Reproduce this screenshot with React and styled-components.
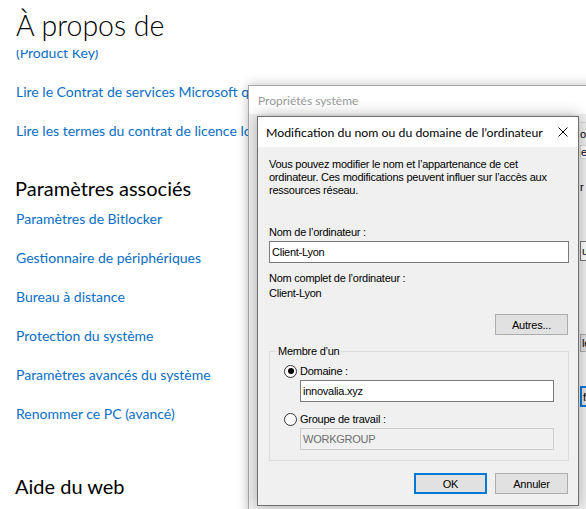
import React from 'react';
import styled, { createGlobalStyle } from 'styled-components';

const WIN = `"Liberation Sans", Arial, sans-serif`;
const UI = `Lato, "Liberation Sans", sans-serif`;

const Global = createGlobalStyle`
  html, body { margin: 0; padding: 0; background: #fff; }
  body { width: 586px; height: 509px; overflow: hidden; }
  * { box-sizing: border-box; }
`;

const Screen = styled.div`
  position: relative;
  width: 586px;
  height: 509px;
  overflow: hidden;
  background: #fff;
  font-family: ${UI};
`;

/* ---------- Settings page ---------- */
const SettingsPage = styled.main`
  display: flex;
  flex-direction: column;
  height: 100%;
`;

const PageHeader = styled.header`
  flex: none;
  height: 50px;
  padding: 8px 0 0 16px;
`;

const PageTitle = styled.h1`
  margin: 0;
  font-family: ${UI};
  font-weight: 300;
  font-size: 28.5px;
  line-height: 34px;
  color: #000;
`;

const Scroller = styled.div`
  flex: 1;
  overflow: hidden;
`;

const ScrollContent = styled.div`
  margin-top: -7px;
  padding-left: 16px;
  display: flex;
  flex-direction: column;
`;

const Section = styled.section`
  display: flex;
  flex-direction: column;
  margin-top: ${(p) => p.$space || 0}px;
`;

const SectionHeading = styled.h2`
  margin: 0 0 7px -1px;
  font-family: ${UI};
  font-weight: 400;
  font-size: 20px;
  line-height: 28px;
  color: #000;
`;

const LinkStack = styled.div`
  display: flex;
  flex-direction: column;
  gap: 19px;
`;

const SettingsLink = styled.a`
  display: block;
  font-size: 14px;
  line-height: 20px;
  color: #0a6ec6;
  text-decoration: none;
  white-space: nowrap;
`;

/* ---------- Back window (Propriétés système) ---------- */
const BackWindow = styled.section`
  position: absolute;
  left: 248px;
  top: 85px;
  width: 380px;
  height: 460px;
  border: 1px solid #a8a8a8;
  background: #f0f0f0;
  box-shadow: 0 0 10px rgba(0, 0, 0, 0.25);
  display: flex;
  flex-direction: column;
`;

const BackTitleBar = styled.div`
  flex: none;
  height: 28px;
  background: #fff;
  display: flex;
  align-items: center;
  padding-left: 9px;
  font-family: ${UI};
  font-size: 12px;
  color: #999;
`;

const BackBody = styled.div`
  flex: 1;
  display: flex;
  flex-direction: column;
  padding-left: 331px;
  font-family: ${WIN};
  font-size: 11px;
  letter-spacing: -0.25px;
  color: #000;
  white-space: nowrap;
`;

const TabRow = styled.div`
  height: ${(p) => p.$h}px;
  margin-top: ${(p) => p.$mt || 0}px;
  display: flex;
  align-items: center;
  background: ${(p) => (p.$active ? '#fff' : '#f0f0f0')};
  border-top: 1px solid #d9d9d9;
  ${(p) => (p.$active ? 'border-left: 1px solid #d9d9d9; border-bottom: 1px solid #d9d9d9;' : '')}
`;

const BackText = styled.div`
  margin-top: ${(p) => p.$mt || 0}px;
  line-height: 13px;
`;

const BackField = styled.div`
  margin-top: ${(p) => p.$mt || 0}px;
  height: 20px;
  display: flex;
  align-items: center;
  background: #fff;
  border: 1px solid #7a7a7a;
  border-right: none;
  padding-left: 1px;
`;

const BackButton = styled.div`
  margin-top: ${(p) => p.$mt || 0}px;
  height: ${(p) => p.$h}px;
  display: flex;
  align-items: center;
  background: #e1e1e1;
  border: ${(p) => (p.$default ? '2px solid #0078d7' : '1px solid #adadad')};
  border-right: none;
  padding-left: 1px;
`;

/* ---------- Front dialog ---------- */
const Dialog = styled.div`
  position: absolute;
  left: 257px;
  top: 116px;
  width: 322px;
  height: 390px;
  border: 1px solid #6f6f6f;
  background: #f0f0f0;
  box-shadow: 0 0 14px rgba(0, 0, 0, 0.3);
  display: flex;
  flex-direction: column;
  font-family: ${WIN};
  font-size: 11px;
  letter-spacing: -0.25px;
  color: #000;
`;

const DialogTitleBar = styled.div`
  flex: none;
  height: 30px;
  background: #fff;
  display: flex;
  align-items: center;
  justify-content: space-between;
  padding: 0 10px 0 8px;
`;

const DialogTitle = styled.span`
  font-family: ${UI};
  font-size: 12.3px;
  letter-spacing: 0;
  color: #000;
  white-space: nowrap;
`;

const CloseButton = styled.button`
  width: 10px;
  height: 10px;
  padding: 0;
  border: none;
  background: transparent;
  display: flex;
`;

const DialogBody = styled.div`
  flex: 1;
  display: flex;
  flex-direction: column;
  padding: 11px 9px 11px 11px;
`;

const Paragraph = styled.p`
  margin: 0;
  line-height: 13px;
`;

const Label = styled.div`
  margin-top: ${(p) => p.$mt || 0}px;
  line-height: 13px;
  white-space: nowrap;
`;

const TextInput = styled.div`
  margin-top: ${(p) => p.$mt || 0}px;
  margin-left: ${(p) => p.$ml || 0}px;
  height: 22px;
  width: ${(p) => p.$w}px;
  display: flex;
  align-items: center;
  padding-left: 2px;
  background: ${(p) => (p.$disabled ? '#f0f0f0' : '#fff')};
  border: 1px solid ${(p) => (p.$disabled ? '#cccccc' : '#7a7a7a')};
  color: ${(p) => (p.$disabled ? '#6d6d6d' : '#000')};
`;

const ButtonRow = styled.div`
  margin-top: ${(p) => p.$mt || 0}px;
  margin-right: 1px;
  display: flex;
  justify-content: flex-end;
  gap: 8px;
`;

const PushButton = styled.button`
  width: 73px;
  height: 21px;
  padding: 0;
  font-family: ${WIN};
  font-size: 11px;
  letter-spacing: -0.2px;
  color: #000;
  background: #e1e1e1;
  border: ${(p) => (p.$default ? '2px solid #0078d7' : '1px solid #adadad')};
`;

const GroupBox = styled.fieldset`
  margin: 10px 0 0 0;
  padding: 6px 14px 10px 14px;
  border: 1px solid #dcdcdc;
  min-inline-size: 0;
  display: flex;
  flex-direction: column;
`;

const GroupLegend = styled.legend`
  margin-left: -8px;
  padding: 0 2px;
  line-height: 13px;
`;

const RadioRow = styled.label`
  margin-top: ${(p) => p.$mt || 0}px;
  height: 14px;
  display: flex;
  align-items: center;
  gap: 3px;
  white-space: nowrap;
`;

const RadioCircle = styled.span`
  width: 13px;
  height: 13px;
  border-radius: 50%;
  border: 1px solid #333;
  background: #fff;
  display: flex;
  align-items: center;
  justify-content: center;
  &::after {
    content: '';
    width: 6px;
    height: 6px;
    border-radius: 50%;
    background: ${(p) => (p.$checked ? '#000' : 'transparent')};
  }
`;

function Radio({ checked, children, mt }) {
  return (
    <RadioRow $mt={mt}>
      <RadioCircle $checked={checked} />
      <span>{children}</span>
    </RadioRow>
  );
}

export default function App() {
  const associated = [
    'Paramètres de Bitlocker',
    'Gestionnaire de périphériques',
    'Bureau à distance',
    'Protection du système',
    'Paramètres avancés du système',
    'Renommer ce PC (avancé)',
  ];
  return (
    <>
      <Global />
      <Screen>
        <SettingsPage>
          <PageHeader>
            <PageTitle>À propos de</PageTitle>
          </PageHeader>
          <Scroller>
            <ScrollContent>
              <Section>
                <LinkStack>
                  <SettingsLink>(Product Key)</SettingsLink>
                  <SettingsLink>Lire le Contrat de services Microsoft qui s’applique à nos services</SettingsLink>
                  <SettingsLink>Lire les termes du contrat de licence logiciel Microsoft</SettingsLink>
                </LinkStack>
              </Section>
              <Section $space={33}>
                <SectionHeading>Paramètres associés</SectionHeading>
                <LinkStack>
                  {associated.map((t) => (
                    <SettingsLink key={t}>{t}</SettingsLink>
                  ))}
                </LinkStack>
              </Section>
              <Section $space={48}>
                <SectionHeading>Aide du web</SectionHeading>
              </Section>
            </ScrollContent>
          </Scroller>
        </SettingsPage>

        <BackWindow>
          <BackTitleBar>Propriétés système</BackTitleBar>
          <BackBody>
            <TabRow $h={23} $mt={8}>ordinateur</TabRow>
            <TabRow $h={14} $active>el</TabRow>
            <BackText $mt={22}>r l’ordinateur sur le réseau.</BackText>
            <BackField $mt={47}>un ordinateur</BackField>
            <BackButton $mt={73} $h={18}>le réseau...</BackButton>
            <BackButton $mt={34} $h={21} $default>fier...</BackButton>
          </BackBody>
        </BackWindow>

        <Dialog role="dialog">
          <DialogTitleBar>
            <DialogTitle>Modification du nom ou du domaine de l’ordinateur</DialogTitle>
            <CloseButton aria-label="Fermer">
              <svg width="10" height="10" viewBox="0 0 10 10">
                <path d="M0.5 0.5 L9.5 9.5 M9.5 0.5 L0.5 9.5" stroke="#000" strokeWidth="1" fill="none" />
              </svg>
            </CloseButton>
          </DialogTitleBar>
          <DialogBody>
            <Paragraph>
              Vous pouvez modifier le nom et l’appartenance de cet
              <br />
              ordinateur. Ces modifications peuvent influer sur l’accès aux
              <br />
              ressources réseau.
            </Paragraph>
            <Label $mt={29}>Nom de l’ordinateur :</Label>
            <TextInput $mt={2} $w={300}>Client-Lyon</TextInput>
            <Label $mt={9}>Nom complet de l’ordinateur :</Label>
            <Label $mt={2}>Client-Lyon</Label>
            <ButtonRow $mt={14}>
              <PushButton>Autres...</PushButton>
            </ButtonRow>
            <GroupBox>
              <GroupLegend>Membre d’un</GroupLegend>
              <Radio checked>Domaine :</Radio>
              <TextInput $mt={2} $ml={16} $w={254}>innovalia.xyz</TextInput>
              <Radio mt={10}>Groupe de travail :</Radio>
              <TextInput $mt={2} $ml={16} $w={254} $disabled>WORKGROUP</TextInput>
            </GroupBox>
            <ButtonRow $mt={12}>
              <PushButton $default>OK</PushButton>
              <PushButton>Annuler</PushButton>
            </ButtonRow>
          </DialogBody>
        </Dialog>
      </Screen>
    </>
  );
}
